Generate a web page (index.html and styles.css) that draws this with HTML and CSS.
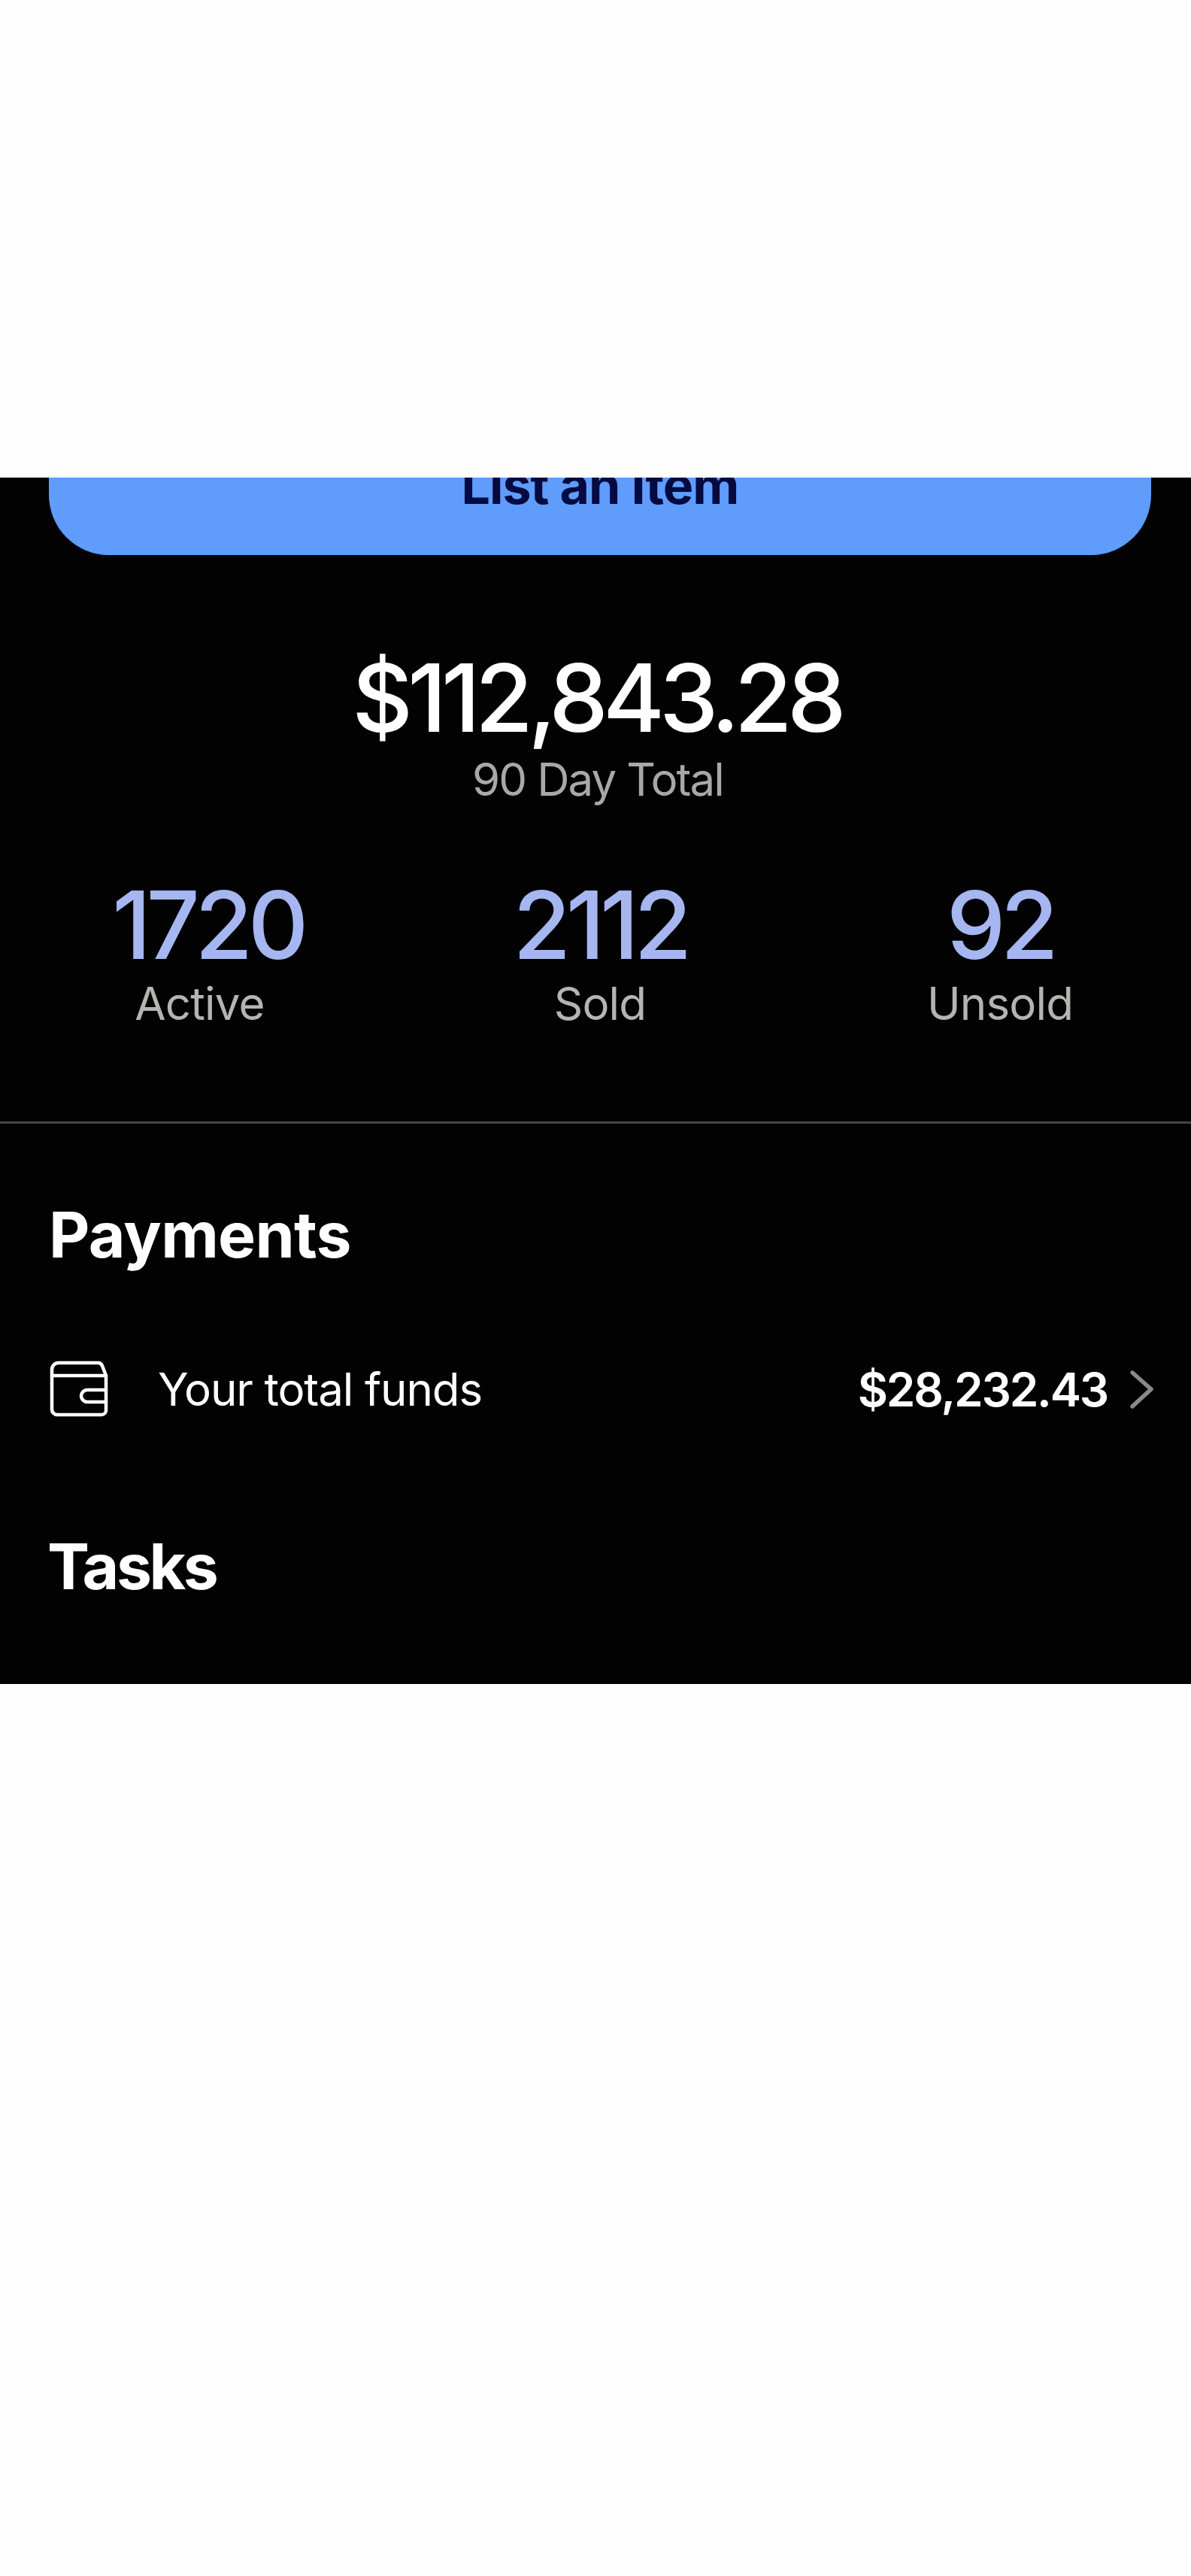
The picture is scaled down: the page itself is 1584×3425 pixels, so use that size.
FILE: index.html
```html
<!DOCTYPE html>
<html lang="en">
<head>
<meta charset="utf-8">
<title>Seller hub</title>
<link rel="stylesheet" href="styles.css">
</head>
<body>
<main class="panel">
  <div class="cta-wrap">
    <button class="cta" type="button"><span class="cta-label">List an Item</span></button>
  </div>
  <section class="total">
    <div class="total-amount">$112,843.28</div>
    <div class="total-label">90 Day Total</div>
  </section>
  <section class="stats">
    <div class="stat"><div class="stat-num stat-num-first">1720</div><div class="stat-label">Active</div></div>
    <div class="stat"><div class="stat-num">2112</div><div class="stat-label">Sold</div></div>
    <div class="stat"><div class="stat-num">92</div><div class="stat-label">Unsold</div></div>
  </section>
  <section class="payments">
    <h2 class="heading heading-payments">Payments</h2>
    <div class="row">
      <svg class="wallet" viewBox="0 0 78 76" fill="none" stroke="#fff" stroke-width="4.5" stroke-linejoin="round" stroke-linecap="round">
        <path d="M3 65V12a9 9 0 0 1 9-9h52a6 6 0 0 1 6 4l5 13v46a6 6 0 0 1-6 6H10a7 7 0 0 1-7-7z"/>
        <path d="M3 20h72"/>
        <path d="M75 39H50a8 8 0 0 0 0 16h25"/>
      </svg>
      <span class="row-label">Your total funds</span>
      <span class="row-value">$28,232.43</span>
      <svg class="chevron" viewBox="0 0 32 51" fill="none" stroke="#8a8a8a" stroke-width="5.5" stroke-linecap="round" stroke-linejoin="round">
        <path d="M4 3l25 22L4 48"/>
      </svg>
    </div>
  </section>
  <section class="tasks">
    <h2 class="heading heading-tasks">Tasks</h2>
  </section>
</main>
</body>
</html>
```
FILE: styles.css
```css
* { box-sizing: border-box; }
html, body { margin: 0; padding: 0; background: #fefefe; }
body { height: 3425px; padding-top: 635px; font-family: Inter, "Liberation Sans", sans-serif; }
.panel { height: 1604px; background: #020202; color: #fff; overflow: hidden; }
.cta-wrap { height: 104px; padding: 0 53px 0 65px; overflow: hidden; }
.cta { display: block; width: 100%; height: 186px; margin: -83px 0 0; border: 0; border-radius: 0 0 80px 80px; background: #5f9cfc; color: #050a40; font: 700 68px/1 Inter, "Liberation Sans", sans-serif; padding: 0; }
.cta-label { display: block; letter-spacing: -1px; }
.total { margin-top: 126px; text-align: center; }
.total-amount { padding-left: 3px; font-size: 125px; font-weight: 500; line-height: 126px; letter-spacing: -6.9px; }
.total-label { margin-top: 10px; padding-left: 6px; font-size: 60px; line-height: 70px; color: #a8a8a8; letter-spacing: -1.9px; }
.stats { display: grid; grid-template-columns: 531px 534px 530px; margin-top: 96px; text-align: center; }
.stat-num { font-size: 125px; font-weight: 500; line-height: 126px; color: #a5b6f0; letter-spacing: -6.6px; }
.stat-num-first { margin-left: 22px; }
.stat-label { margin-top: 6px; font-size: 60px; line-height: 70px; color: #b4b4b0; letter-spacing: -0.8px; }
.payments { margin-top: 122px; border-top: 3px solid #454545; padding: 98px 50px 0 66px; }
.heading { margin: 0; font-size: 84px; line-height: 100px; font-weight: 700; }
.heading-payments { margin-left: -1px; letter-spacing: -0.7px; }
.heading-tasks { letter-spacing: -3.4px; }
.row { display: flex; align-items: center; margin-top: 115px; height: 80px; }
.wallet { width: 78px; height: 76px; flex: none; }
.row-label { margin-left: 66px; font-size: 60px; letter-spacing: -1.1px; }
.row-value { margin-left: auto; font-size: 62px; font-weight: 600; letter-spacing: -2.2px; }
.chevron { width: 32px; height: 51px; margin-left: 29px; flex: none; }
.tasks { margin-top: 146px; padding-left: 63px; }
```
